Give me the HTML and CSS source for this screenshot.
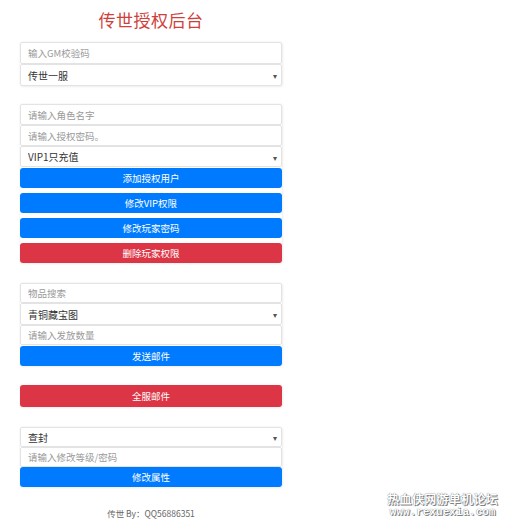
FILE: index.html
```html
<!DOCTYPE html>
<html lang="zh">
<head>
<meta charset="utf-8">
<title>传世授权后台</title>
<link rel="stylesheet" href="styles.css">
</head>
<body>
<div class="page">
  <h1 class="title">传世授权后台</h1>

  <div class="card tight">
    <input class="field tall" placeholder="输入GM校验码">
    <div class="sel tall"><select><option>传世一服</option></select></div>
  </div>

  <div class="card">
    <input class="field" placeholder="请输入角色名字">
    <input class="field" placeholder="请输入授权密码。">
    <div class="sel"><select><option>VIP1只充值</option></select></div>
    <button class="btn blue first">添加授权用户</button>
    <button class="btn blue">修改VIP权限</button>
    <button class="btn blue">修改玩家密码</button>
    <button class="btn red">删除玩家权限</button>
  </div>

  <div class="card mid">
    <input class="field short" placeholder="物品搜索">
    <div class="sel tall"><select><option>青铜藏宝图</option></select></div>
    <input class="field short" placeholder="请输入发放数量">
    <button class="btn blue first">发送邮件</button>
  </div>

  <div class="card">
    <button class="btn red big">全服邮件</button>
  </div>

  <div class="card">
    <div class="sel short"><select><option>查封</option></select></div>
    <input class="field short" placeholder="请输入修改等级/密码">
    <button class="btn blue flush">修改属性</button>
  </div>

  <p class="footer">传世 By：QQ56886351</p>
</div>
<div class="watermark">
  <div class="wm-cn">热血侠网游单机论坛</div>
  <div class="wm-en">www.rexuexia.com</div>
</div>
</body>
</html>
```
FILE: styles.css
```css
* { box-sizing: border-box; }
html, body { margin: 0; padding: 0; background: #fff; }
body {
  width: 508px;
  height: 525px;
  position: relative;
  overflow: hidden;
  font-family: "Noto Sans CJK SC", "Noto Sans", sans-serif;
}
.page {
  width: 262px;
  margin-left: 20px;
  display: flex;
  flex-direction: column;
}
.title {
  margin: 8px 0 10px;
  height: 24px;
  line-height: 24px;
  font-size: 17px;
  font-weight: 400;
  color: #cf3f3c;
  text-align: center;
  letter-spacing: 0.5px;
}
.card {
  display: flex;
  flex-direction: column;
  margin-bottom: 20px;
  box-shadow: 0 0 2px rgba(0,0,0,0.08), 1px 1px 3px rgba(0,0,0,0.05);
  border-radius: 2px;
}
.card.tight { margin-bottom: 18px; }
.card.mid { margin-bottom: 19px; }
.field, .sel select {
  display: block;
  width: 100%;
  height: 21px;
  margin: 0;
  padding: 0 7px;
  border: 1px solid #e3e3e3;
  border-radius: 2px;
  background: #fff;
  font-family: "Noto Sans CJK SC", "Noto Sans", sans-serif;
  font-size: 9.5px;
  color: #444;
  outline: none;
}
.field::placeholder { color: #9a9a9a; }
.field.tall { height: 22px; }
.field.short { height: 20px; }
.sel { position: relative; }
.sel select {
  -webkit-appearance: none;
  appearance: none;
  color: #333;
  font-size: 10px;
}
.sel.tall select { height: 22px; }
.sel.short select { height: 20px; }
.sel::after {
  content: "▾";
  position: absolute;
  right: 5px;
  top: 50%;
  transform: translateY(-50%);
  font-size: 8px;
  color: #555;
  pointer-events: none;
}
.btn {
  display: block;
  width: 100%;
  height: 20px;
  margin: 5px 0 0;
  padding: 0;
  border: 0;
  border-radius: 3px;
  color: #fff;
  font-family: "Noto Sans CJK SC", "Noto Sans", sans-serif;
  font-size: 9.5px;
  line-height: 20px;
  text-align: center;
}
.btn.first { margin-top: 1px; }
.btn.flush { margin-top: 0; }
.btn.big { margin-top: 0; height: 22px; line-height: 22px; }
.blue { background: #007bff; }
.red { background: #dc3545; }
.footer {
  margin: 0;
  line-height: 12px;
  font-size: 8.5px;
  color: #666;
  text-align: center;
}
.watermark {
  position: absolute;
  right: 10px;
  bottom: 7px;
  display: flex;
  flex-direction: column;
  align-items: center;
  gap: 1px;
  color: #fff;
  text-shadow: 0 0 1px #555, 1px 1px 0 #888;
}
.wm-cn {
  font-size: 12px;
  line-height: 14px;
  letter-spacing: 0.3px;
  font-weight: 700;
}
.wm-en {
  font-family: "Liberation Mono", "DejaVu Sans Mono", monospace;
  font-size: 11px;
  line-height: 11px;
  font-weight: 700;
}
```
